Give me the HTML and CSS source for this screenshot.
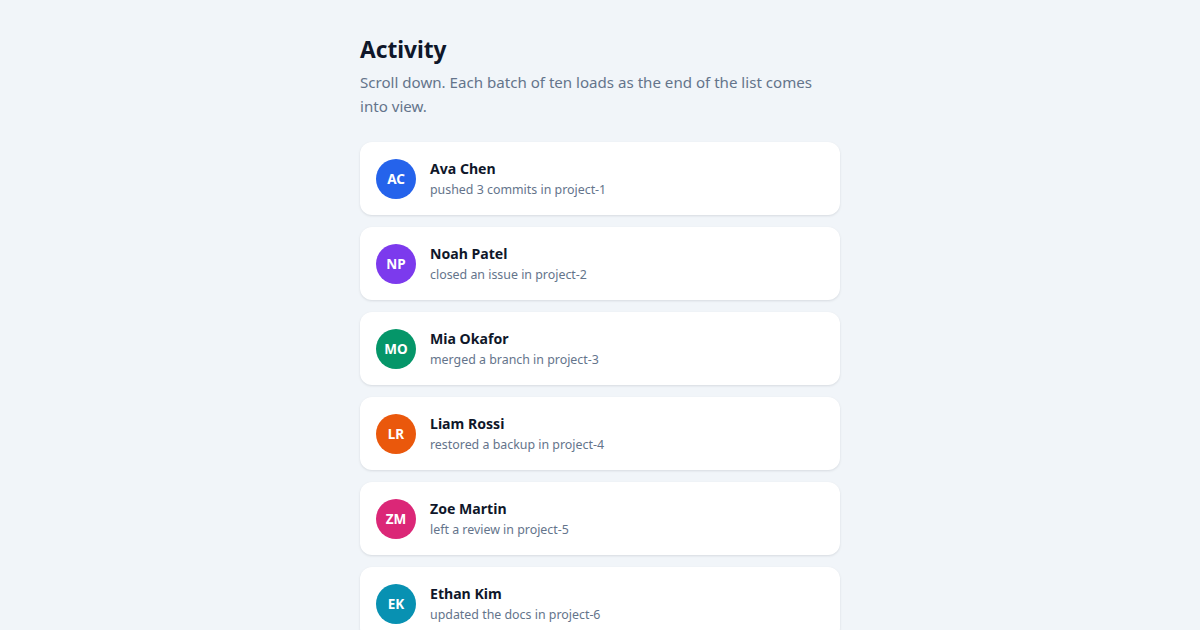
FILE: index.html
```html
<!DOCTYPE html>
<html lang="en">
<head>
    <meta charset="UTF-8">
    <title>Activity</title>
    <link rel="stylesheet" href="styles.css">
</head>
<body>
    <div class="container">
        <h1>Activity</h1>
        <p class="intro">Scroll down. Each batch of ten loads as the end of the list comes into view.</p>

        <ul class="feed">
            <li class="item">
                <span class="avatar blue">AC</span>
                <div class="info">
                    <strong>Ava Chen</strong>
                    <span>pushed 3 commits in project-1</span>
                </div>
            </li>
            <li class="item">
                <span class="avatar purple">NP</span>
                <div class="info">
                    <strong>Noah Patel</strong>
                    <span>closed an issue in project-2</span>
                </div>
            </li>
            <li class="item">
                <span class="avatar green">MO</span>
                <div class="info">
                    <strong>Mia Okafor</strong>
                    <span>merged a branch in project-3</span>
                </div>
            </li>
            <li class="item">
                <span class="avatar orange">LR</span>
                <div class="info">
                    <strong>Liam Rossi</strong>
                    <span>restored a backup in project-4</span>
                </div>
            </li>
            <li class="item">
                <span class="avatar pink">ZM</span>
                <div class="info">
                    <strong>Zoe Martin</strong>
                    <span>left a review in project-5</span>
                </div>
            </li>
            <li class="item">
                <span class="avatar cyan">EK</span>
                <div class="info">
                    <strong>Ethan Kim</strong>
                    <span>updated the docs in project-6</span>
                </div>
            </li>
        </ul>
    </div>
</body>
</html>
```

FILE: styles.css
```css
body {
    font-family: 'Segoe UI', 'Noto Sans', 'Open Sans', sans-serif;
    background-color: #f1f5f9;
    color: #0f172a;
    margin: 0;
    padding: 32px 20px;
}

.container {
    max-width: 480px;
    margin: 0 auto;
}

h1 {
    font-size: 22.7px;
    line-height: 36px;
    margin: 0 0 2px;
}

.intro {
    font-size: 15.1px;
    line-height: 24px;
    color: #64748b;
    margin: 0 0 24px;
}

.feed {
    list-style: none;
    padding: 0;
    margin: 0;
    display: grid;
    gap: 12px;
}

.item {
    display: flex;
    align-items: center;
    gap: 14px;
    background: white;
    padding: 16px;
    border-radius: 12px;
    box-shadow: 0 1px 3px rgba(15, 23, 42, 0.08), 0 1px 2px rgba(15, 23, 42, 0.04);
}

.avatar {
    width: 40px;
    height: 40px;
    border-radius: 50%;
    color: white;
    font-size: 13.5px;
    font-weight: bold;
    display: flex;
    align-items: center;
    justify-content: center;
    flex-shrink: 0;
}

.blue { background: #2563eb; }
.purple { background: #7c3aed; }
.green { background: #059669; }
.orange { background: #ea580c; }
.pink { background: #db2777; }
.cyan { background: #0891b2; }

.info {
    display: flex;
    flex-direction: column;
    gap: 2px;
}

.info strong {
    font-size: 14.1px;
    line-height: 21px;
}

.info span {
    font-size: 12.4px;
    line-height: 18px;
    color: #64748b;
}
```
